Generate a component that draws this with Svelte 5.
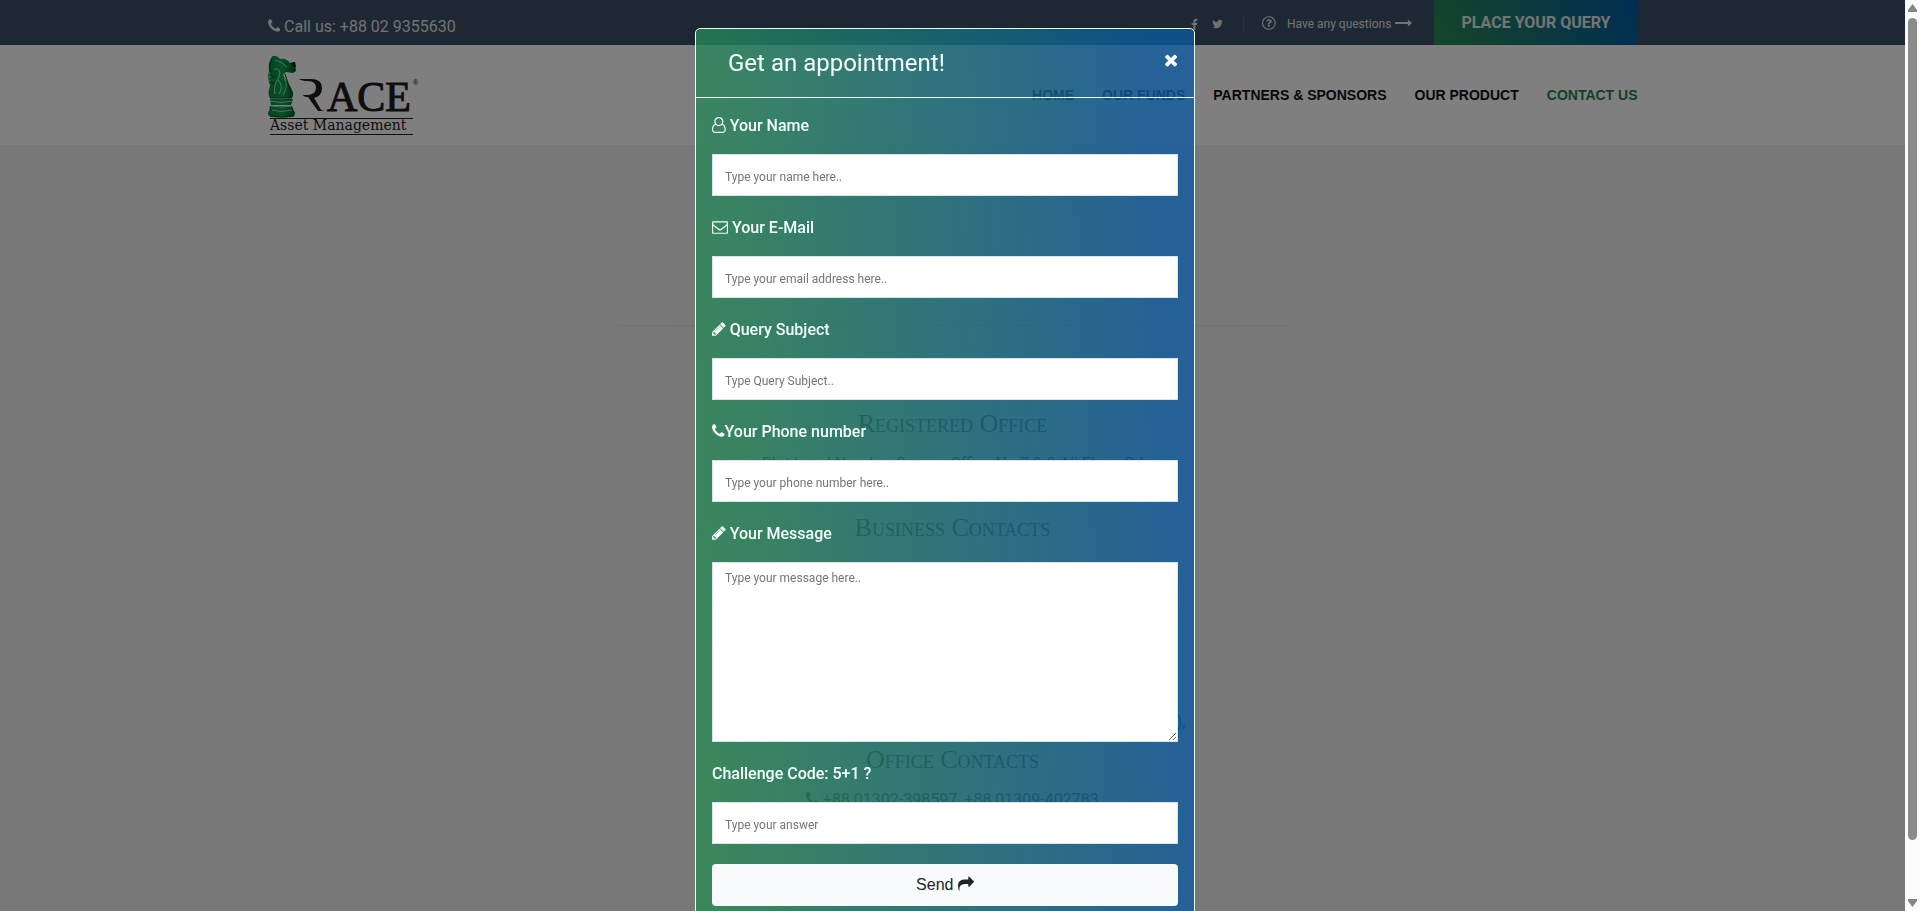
<script>
	let open = true;

	const nav = [
		{ label: 'HOME' },
		{ label: 'OUR FUNDS' },
		{ label: 'PARTNERS & SPONSORS' },
		{ label: 'OUR PRODUCT' },
		{ label: 'CONTACT US', active: true }
	];

	const icons = {
		phone: { w: 1408, d: 'M1408 1240q0 27-10 70.5t-21 68.5q-21 50-122 106-94 51-186 51-27 0-53-3.5t-57.5-12.5-47-14.5-55.5-20.5-49-18q-98-35-175-83-127-79-264-216t-216-264q-48-77-83-175-3-9-18-49t-20.5-55.5-14.5-47-12.5-57.5-3.5-53q0-92 51-186 56-101 106-122 25-11 68.5-21t70.5-10q14 0 21 3 18 6 53 76 11 19 30 54t35 63.5 31 53.5q3 4 17.5 25t21.5 35.5 7 28.5q0 20-28.5 50t-62 55-62 53-28.5 46q0 9 5 22.5t8.5 20.5 14 24 11.5 19q76 137 174 235t235 174q2 1 19 11.5t24 14 20.5 8.5 22.5 5q18 0 46-28.5t53-62 55-62 50-28.5q14 0 28.5 7t35.5 21.5 25 17.5q25 15 53.5 31t63.500 35 54 30q70 35 76 53 3 7 3 21z' },
		user: { w: 1536, d: 'M1201 784q47 14 89.5 38t89 73 79.500 115.500 55 172 22 236.500q0 154-100 263.500t-241 109.500h-854q-141 0-241-109.500t-100-263.500q0-131 22-236.500t55-172 79.500-115.500 89-73 89.500-38q-79-125-79-272 0-104 40.500-198.500t109.500-163.500 163.500-109.500 198.500-40.500 198.500 40.500 163.500 109.500 109.500 163.500 40.500 198.500q0 147-79 272zm-433-656q-159 0-271.500 112.500t-112.500 271.500 112.500 271.500 271.500 112.500 271.500-112.500 112.500-271.500-112.500-271.500-271.500-112.500zm427 1536q88 0 150.500-71.500t62.500-173.500q0-239-78.500-377t-225.500-145q-145 127-336 127t-336-127q-147 7-225.500 145t-78.500 377q0 102 62.500 173.500t150.500 71.500h854z' },
		envelope: { w: 1792, d: 'M1664 1504V736c-21 24-44 46-69 66-143 110-287 222-426 338-75 63-168 140-272 140h-2c-104 0-197-77-272-140-139-116-283-228-426-338-25-20-48-42-69-66v768c0 17 15 32 32 32h1472c17 0 32-15 32-32zm0-1051c0-29 7-69-32-69H160c-17 0-32 15-32 32 0 114 57 213 147 284 134 105 268 211 401 317 53 43 149 135 219 135h2c70 0 166-92 219-135 133-106 267-212 401-317 65-51 147-162 147-247zm128-37v1088c0 88-72 160-160 160H160c-88 0-160-72-160-160V416c0-88 72-160 160-160h1472c88 0 160 72 160 160z' },
		pencil: { w: 1536, d: 'M363 1536l91-91-235-235-91 91v107h128v128h107zm523-928c0-13-9-22-22-22-6 0-12 2-17 7L305 1135c-5 5-7 11-7 17 0 13 9 22 22 22 6 0 12-2 17-7l542-542c5-5 7-11 7-17zm-54-192l416 416-832 832H0v-416zm683 96c0 34-14 67-37 90l-166 166-416-416 166-165c23-24 56-38 90-38s67 14 91 38l235 234c23 24 37 57 37 91z' },
		share: { w: 1792, d: 'M1792 640c0 17-7 33-19 45l-512 512c-12 12-28 19-45 19-35 0-64-29-64-64V896H928c-433 0-768 88-768 563 0 41 5 82 8 123 1 10 3 21 3 31 0 18-10 32-29 32-13 0-20-7-27-17-14-20-25-50-36-72C40 1450 0 1313 0 1152 0 1023 12 890 60 768c142-353 536-384 868-384h224V128c0-35 29-64 64-64 17 0 33 7 45 19l512 512c12 12 19 28 19 45z' },
		facebook: { w: 1024, d: 'M959 140v264H802c-123 0-146 59-146 144v189h293l-39 296H656v759H350v-759H95V737h255V519c0-253 155-391 381-391 108 0 201 8 228 12z' },
		twitter: { w: 1664, d: 'M1620 408c-44 64-99 121-162 167 1 14 1 28 1 42 0 427-325 919-919 919-183 0-353-53-496-145 26 3 51 4 78 4 151 0 290-51 401-138-142-3-261-96-302-224 20 3 40 5 61 5 29 0 58-4 85-11-148-30-259-160-259-317v-4c43 24 93 39 146 41-87-58-144-157-144-269 0-60 16-115 44-163 159 196 398 324 666 338-5-24-8-49-8-74 0-178 144-323 323-323 93 0 177 39 236 102 73-14 143-41 205-78-24 75-75 138-142 178 65-7 128-25 186-50z' },
		question: { w: 1536, d: 'M880 1136v160c0 18-14 32-32 32H688c-18 0-32-14-32-32v-160c0-18 14-32 32-32h160c18 0 32 14 32 32zm208-448c0 139-101 197-178 240-51 29-62 49-62 80v32H656v-60c0-105 78-147 140-181 54-30 75-58 75-94 0-46-58-78-111-78-65 0-97 33-144 91l-124-94c71-113 171-160 288-160 162 0 308 94 308 224zM768 256c-353 0-640 287-640 640s287 640 640 640 640-287 640-640-287-640-640-640zm768 640c0 424-344 768-768 768S0 1320 0 896s344-768 768-768 768 344 768 768z' },
		arrow: { w: 1920, d: 'M1900 900l-410 370c-20 18-50 4-50-24V1010H32c-18 0-32-14-32-32V814c0-18 14-32 32-32h1408V546c0-28 30-42 50-24l410 350c8 8 8 20 0 28z' },
		times: { w: 1408, d: 'M1298 1322c0 25-10 50-28 68l-136 136c-18 18-43 28-68 28s-50-10-68-28L704 1232l-294 294c-18 18-43 28-68 28s-50-10-68-28l-136-136c-18-18-28-43-28-68s10-50 28-68l294-294-294-294c-18-18-28-43-28-68s10-50 28-68l136-136c18-18 43-28 68-28s50 10 68 28l294 294 294-294c18-18 43-28 68-28s50 10 68 28l136 136c18 18 28 43 28 68s-10 50-28 68L976 960l294 294c18 18 28 43 28 68z' }
	};

	const fields = [
		{ id: 'name', icon: 'user', label: ' Your Name', type: 'text', hint: 'Type your name here..' },
		{ id: 'email', icon: 'envelope', label: ' Your E-Mail', type: 'email', hint: 'Type your email address here..' },
		{ id: 'subject', icon: 'pencil', label: ' Query Subject', type: 'text', hint: 'Type Query Subject..' },
		{ id: 'phone', icon: 'phone', label: 'Your Phone number', type: 'tel', hint: 'Type your phone number here..' },
		{ id: 'message', icon: 'pencil', label: ' Your Message', type: 'area', hint: 'Type your message here..' },
		{ id: 'answer', label: 'Challenge Code: 5+1 ?', type: 'text', hint: 'Type your answer' }
	];
</script>

{#snippet icon(name)}
	<svg class="icon" viewBox="0 0 {icons[name].w} 1792" aria-hidden="true"><path d={icons[name].d} /></svg>
{/snippet}

<div class="window">
	<div class="site">
		<div class="topbar">
			<div class="container">
				<a class="call" href="tel:+88029355630">{@render icon('phone')} Call us: +88 02 9355630</a>
				<div class="top-links">
					<a href="#facebook" aria-label="Facebook">{@render icon('facebook')}</a>
					<a href="#twitter" aria-label="Twitter">{@render icon('twitter')}</a>
					<a class="questions" href="#questions">
						<span class="big">{@render icon('question')}</span>
						<span>Have any questions</span>
						<span class="long">{@render icon('arrow')}</span>
					</a>
					<button class="query" on:click={() => (open = true)}>PLACE YOUR QUERY</button>
				</div>
			</div>
		</div>

		<header>
			<div class="container">
				<a href="#home" class="logo" aria-label="Race Asset Management">
					<svg viewBox="1 -2 154 84">
						<defs>
							<linearGradient id="knight" x1="0" x2="1">
								<stop offset="0" stop-color="#078c42" />
								<stop offset=".5" stop-color="#08a84f" />
								<stop offset="1" stop-color="#045a2b" />
							</linearGradient>
						</defs>
						<path fill="url(#knight)" d="M4 3Q6 -1 11 2L13 4Q19 3 23 8L28 7L29 16L26 18L19 17L16 20Q19 25 23 31Q28 39 25 43L3 43Q0 39 3 31Q0 23 2 15Q1 8 4 3zM3 44H26L24 50H4zM3 51H25L27 56Q29 58 27 61Q14 64 2 61Q0 58 2 56z" />
						<path fill="none" stroke="#b9d8c4" d="M8 5Q15 7 20 12M7 14Q15 13 12 22Q6 31 8 39M17 23Q22 31 16 40M11 25Q17 31 12 39M3 46Q14 49 25 46M4 51Q14 53 25 51M5 55Q14 58 25 55" />
						<path fill="none" stroke="#064522" d="M5 4Q1 11 4 17M4 20L8 23M3 26L7 29M18 8L21 10M22 14L28 15M18 19L22 31Q25 39 23 42M3 43H25M3 61Q14 63 27 61" />
						<path fill="#10241a" d="M24 8L28 7L29 12L25 11z" />
						<path fill="none" stroke="#e5e5e5" stroke-dasharray="2 2" d="M3 5Q0 11 2 18T2 31" />
						<path fill="#1c1a20" d="M32 24H44Q55 24 55 33Q55 41 47 43L53 53Q54 56 58 56H51L41 42Q37 42 36 40Q49 41 49 33Q49 26 41 26Q35 26 32 24z" />
						<text x="60" y="56" class="race">ACE</text>
						<text x="146" y="30" class="reg">®</text>
						<path stroke="#1c1a20" d="M3 63.500H146M3 79.500H146" />
						<text x="3" y="75" class="asset">Asset Management</text>
					</svg>
				</a>
				<nav>
					{#each nav as item}
						<a href="#page" class:active={item.active}>{item.label}</a>
					{/each}
				</nav>
			</div>
		</header>

		<main>
			<hr />
			<section class="registered">
				<h2>Registered Office</h2>
				<p>Plot Level Number Square Office No 7 & 8 All Floor, Rd</p>
			</section>
			<section class="business">
				<h2>Business Contacts</h2>
				<p>),</p>
			</section>
			<section class="office">
				<h2>Office Contacts</h2>
				<p>{@render icon('phone')} +88 01302-398597, +88 01309-402783</p>
			</section>
		</main>
	</div>

	<div class="scrollbar" aria-hidden="true">
		<svg viewBox="0 0 9 8"><path d="M4.500 0L9 6V8H0V6z" /></svg>
		<div class="thumb"></div>
		<svg viewBox="0 0 9 8"><path d="M0 0H9V2L4.500 8L0 2z" /></svg>
	</div>
</div>

{#if open}
	<div class="modal-backdrop">
		<div class="modal" role="dialog" aria-modal="true" aria-labelledby="modal-title">
			<div class="modal-header">
				<h4 id="modal-title">Get an appointment!</h4>
				<button class="close" aria-label="Close" on:click={() => (open = false)}>{@render icon('times')}</button>
			</div>
			<form class="modal-body" on:submit|preventDefault>
				{#each fields as field}
					<div class="form-group">
						<label for={field.id}>{#if field.icon}{@render icon(field.icon)}{/if}{field.label}</label>
						{#if field.type === 'area'}
							<textarea id={field.id} placeholder={field.hint}></textarea>
						{:else}
							<input id={field.id} type={field.type} placeholder={field.hint} />
						{/if}
					</div>
				{/each}
				<button class="send" type="submit">Send {@render icon('share')}</button>
			</form>
		</div>
	</div>
{/if}

<style>
	:global(body) {
		overflow: hidden;
		font: 400 16px/24px Roboto, sans-serif;
	}

	.window {
		display: flex;
		height: 100vh;
		overflow: hidden;
	}

	.site {
		flex: 1;
		background: #f0f0f0;
	}

	.container {
		display: flex;
		justify-content: space-between;
		max-width: 1370px;
		margin: 0 auto;
	}

	a {
		color: inherit;
		text-decoration: none;
	}

	button {
		border: 0;
		cursor: pointer;
	}

	.icon {
		height: 1em;
		fill: currentColor;
		vertical-align: -2px;
	}

	.topbar {
		background: #3a5068;
		color: #e4e4e4;
	}

	.topbar .container {
		height: 45px;
	}

	.call {
		padding-top: 15px;
	}

	.top-links {
		display: flex;
		align-items: center;
		gap: 14px;
		font-size: 12px;
	}

	.top-links a {
		padding-top: 2px;
	}

	.top-links .questions {
		display: flex;
		align-items: center;
		gap: 4px;
		padding: 0 0 0 18px;
		margin: 2px 8px 0 6px;
		border-left: 1px solid #50647a;
		line-height: 16px;
	}

	.big {
		margin-right: 7px;
		font-size: 16px;
	}

	.long {
		font-size: 16px;
	}

	.query {
		align-self: stretch;
		padding: 0 27px;
		background: linear-gradient(60deg, #2c8c4e, #005ca8);
		color: #e8e8e8;
		font: 700 16px/24px Roboto, sans-serif;
	}

	header {
		background: #fff;
	}

	header .container {
		height: 100px;
		align-items: center;
	}

	.logo svg {
		display: block;
		width: 154px;
	}

	.race {
		font: 42px "Liberation Serif", serif;
		fill: #1c1a20;
		stroke: #1c1a20;
	}

	.reg {
		font: 7px "Liberation Sans", sans-serif;
	}

	.asset {
		font: 14px "DejaVu Serif", serif;
		fill: #1c1a20;
	}

	nav {
		display: flex;
		gap: 28px;
		color: #111;
		font: 700 14px/20px "Liberation Sans", Arial, sans-serif;
	}

	nav .active {
		color: #28834b;
	}

	main {
		text-align: center;
		color: #444;
	}

	hr {
		width: 672px;
		height: 1px;
		margin: 180px auto 0;
		border: 0;
		background: linear-gradient(90deg, #e4e4e4, #d4d4d4, #e4e4e4);
	}

	h2 {
		margin: 0;
		font: 400 26px/32px "Liberation Serif", serif;
		font-variant: small-caps;
	}

	main p {
		margin: 12px 0 0;
	}

	.registered {
		margin-top: 82px;
	}

	.business {
		margin-top: 36px;
	}

	.business p {
		width: 466px;
		margin: 166px auto 0;
		text-align: right;
	}

	.office {
		margin-top: 10px;
	}

	.scrollbar {
		display: flex;
		flex-direction: column;
		align-items: center;
		gap: 6px;
		width: 15px;
		padding: 4px 0;
		box-sizing: border-box;
		background: #fcfcfc;
	}

	.scrollbar svg {
		width: 9px;
		fill: #858585;
	}

	.thumb {
		width: 9px;
		height: 91%;
		margin-bottom: auto;
		border-radius: 5px;
		background: #8b8b8b;
	}

	.modal-backdrop {
		position: fixed;
		inset: 0 15px 0 0;
		padding: 28px 15px 0 0;
		overflow: hidden;
		background: rgba(0, 0, 0, 0.5);
	}

	.modal {
		max-width: 500px;
		box-sizing: border-box;
		margin: 0 auto;
		border: 1px solid #eefaf8;
		border-radius: 5px;
		background: linear-gradient(87deg, rgba(42, 140, 80, 0.78), rgba(12, 90, 158, 0.78) 92%);
		color: #f4fffb;
	}

	.modal-header {
		display: flex;
		justify-content: space-between;
		align-items: flex-start;
		padding: 16px 16px 16px 32px;
		border-bottom: 1px solid #eefaf8;
	}

	h4 {
		margin: 0;
		font: 400 24px/36px Roboto, sans-serif;
	}

	.close {
		padding: 6px 0;
		background: none;
		color: #fff;
		font-size: 18px;
		line-height: 20px;
	}

	.modal-body {
		padding: 16px;
	}

	.form-group {
		margin-bottom: 20px;
	}

	label {
		display: block;
		margin-bottom: 16px;
		font-weight: 500;
		white-space: pre-wrap;
	}

	input,
	textarea {
		display: block;
		width: 100%;
		height: 42px;
		box-sizing: border-box;
		padding: 4px 12px 0;
		border: 1px solid #d8e4ea;
		border-radius: 0;
		background: #fff;
		font: 12px/18px Roboto, sans-serif;
	}

	textarea {
		height: 180px;
		padding-top: 6px;
	}

	::placeholder {
		color: #757575;
	}

	.send {
		width: 100%;
		height: 42px;
		border-radius: 4px;
		background: #f8fafb;
		color: #212529;
		font: 16px/24px "Liberation Sans", Arial, sans-serif;
	}
</style>
